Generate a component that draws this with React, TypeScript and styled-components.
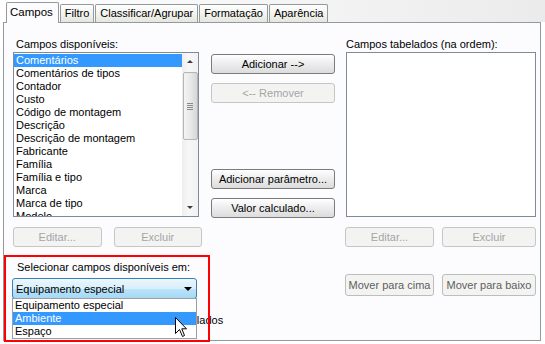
import React from "react";
import styled, { createGlobalStyle, css } from "styled-components";

const GlobalStyle = createGlobalStyle`
  html, body {
    margin: 0;
    padding: 0;
    background: #ffffff;
  }
  body {
    font-family: "Liberation Sans", Arial, sans-serif;
    font-size: 11px;
    color: #000000;
  }
`;

const Window = styled.div`
  position: relative;
  width: 545px;
  height: 344px;
  overflow: hidden;
  background: #ffffff;
`;

const TabStrip = styled.div`
  display: flex;
  align-items: flex-end;
  height: 22px;
  padding-left: 6px;
  background: linear-gradient(to right, #ffffff 0%, #f6f6f6 45%, #ebebeb 100%);
`;

const Tab = styled.div<{ $active?: boolean }>`
  box-sizing: border-box;
  height: 18px;
  padding: 0 4px;
  margin-right: 1px;
  line-height: 17px;
  border: 1px solid #919b9c;
  border-bottom: none;
  border-radius: 2px 2px 0 0;
  background: linear-gradient(#fefefe, #f1f1ec 60%, #e6e6e0);
  white-space: nowrap;

  ${(p) =>
    p.$active &&
    css`
      position: relative;
      z-index: 1;
      height: 21px;
      margin-bottom: -1px;
      padding: 0 5px 0 3px;
      line-height: 19px;
      font-size: 11.5px;
      background: #fcfcfe;
    `}
`;

const Panel = styled.div`
  box-sizing: border-box;
  display: flex;
  width: 538px;
  height: 319px;
  margin-left: 3px;
  padding: 13px 0 0 9px;
  border: 1px solid #919b9c;
  background: #fcfcfe;
`;

const Column = styled.div<{ $width: number; $offset?: number }>`
  display: flex;
  flex-direction: column;
  width: ${(p) => p.$width}px;
  margin-left: ${(p) => p.$offset ?? 0}px;
`;

const Label = styled.div<{ $indent?: number; $top?: number }>`
  height: 16px;
  margin-top: ${(p) => p.$top ?? 0}px;
  line-height: 16px;
  padding-left: ${(p) => p.$indent ?? 3}px;
  white-space: nowrap;
`;

const ListBox = styled.div<{ $width: number; $shift?: number }>`
  box-sizing: border-box;
  display: flex;
  width: ${(p) => p.$width}px;
  height: 165px;
  margin-left: ${(p) => p.$shift ?? 0}px;
  border: 1px solid #7f8a99;
  background: #ffffff;
  overflow: hidden;
`;

const Items = styled.div`
  flex: 1;
  padding-top: 1px;
  overflow: hidden;
`;

const Item = styled.div<{ $selected?: boolean }>`
  height: 13px;
  line-height: 13px;
  padding-left: 2px;
  white-space: nowrap;
  ${(p) =>
    p.$selected &&
    css`
      background: #3399ff;
      color: #ffffff;
    `}
`;

const ScrollBar = styled.div`
  display: flex;
  flex-direction: column;
  align-items: center;
  width: 16px;
  background: linear-gradient(to right, #eeeeee, #f7f7f7 40%, #f1f1f1);
`;

const ScrollArrow = styled.div<{ $down?: boolean }>`
  display: flex;
  align-items: center;
  justify-content: center;
  width: 16px;
  height: 17px;
  &::after {
    content: "";
    border-left: 3px solid transparent;
    border-right: 3px solid transparent;
    ${(p) =>
      p.$down
        ? css`border-top: 3px solid #3c3c3c;`
        : css`border-bottom: 3px solid #3c3c3c;`}
  }
`;

const Thumb = styled.div`
  box-sizing: border-box;
  display: flex;
  flex-direction: column;
  align-items: center;
  justify-content: center;
  gap: 1px;
  width: 15px;
  height: 68px;
  margin-top: 2px;
  border: 1px solid #b5b5b5;
  border-radius: 2px;
  background: linear-gradient(to right, #f4f4f4, #e8e8e8 50%, #d6d6d6);
`;

const Grip = styled.span`
  width: 6px;
  height: 1px;
  background: #8a8a8a;
`;

const Spacer = styled.div`
  flex: 1;
`;

type Tone = "normal" | "disabled" | "muted";

const Button = styled.div<{ $tone?: Tone; $width: number; $tall?: boolean }>`
  box-sizing: border-box;
  display: flex;
  align-items: center;
  justify-content: center;
  width: ${(p) => p.$width}px;
  height: ${(p) => (p.$tall ? 22 : 20)}px;
  border-radius: 3px;
  white-space: nowrap;
  ${(p) =>
    p.$tone === "disabled"
      ? css`
          border: 1px solid #c6c6c6;
          background: #f3f3f2;
          color: #a5a5a5;
        `
      : p.$tone === "muted"
      ? css`
          border: 1px solid #bdbdbd;
          background: #f3f3f2;
          color: #5e5e5e;
        `
      : css`
          border: 1px solid #7a7a7a;
          background: linear-gradient(#ffffff, #eeeeee 45%, #dcdcdc);
          color: #000000;
        `}
`;

const ButtonRow = styled.div<{ $top: number; $gap: number }>`
  display: flex;
  gap: ${(p) => p.$gap}px;
  margin-top: ${(p) => p.$top}px;
`;

const ButtonStack = styled.div<{ $top: number }>`
  display: flex;
  flex-direction: column;
  gap: 9px;
  margin-top: ${(p) => p.$top}px;
`;

const ComboArea = styled.div`
  position: relative;
  margin-top: 3px;
  margin-left: -1px;
`;

const Combo = styled.div`
  box-sizing: border-box;
  display: flex;
  align-items: center;
  justify-content: space-between;
  width: 185px;
  height: 21px;
  padding: 0 4px 0 3px;
  border: 1px solid #3c7fb1;
  border-radius: 3px;
  background: linear-gradient(#eaf6fd 0%, #d9effc 50%, #bce4fa 51%, #a6d8f5 100%);
  white-space: nowrap;
`;

const ComboArrow = styled.span`
  width: 0;
  height: 0;
  border-left: 4px solid transparent;
  border-right: 4px solid transparent;
  border-top: 4px solid #000000;
`;

const DropList = styled.div`
  position: absolute;
  z-index: 3;
  top: 20px;
  left: 0;
  box-sizing: border-box;
  width: 185px;
  border: 1px solid #9a9ea6;
  background: #ffffff;
`;

const DropItem = styled.div<{ $selected?: boolean }>`
  height: 13px;
  line-height: 13px;
  padding-left: 2px;
  white-space: nowrap;
  ${(p) =>
    p.$selected &&
    css`
      background: #3399ff;
      color: #ffffff;
    `}
`;

const CheckRow = styled.div`
  display: flex;
  align-items: center;
  gap: 7px;
  margin-top: 14px;
  height: 13px;
  white-space: nowrap;
`;

const CheckBox = styled.span`
  box-sizing: border-box;
  width: 13px;
  height: 13px;
  border: 1px solid #1c5180;
  background: #f4f4f0;
`;

const Highlight = styled.div`
  position: absolute;
  z-index: 5;
  left: 4px;
  top: 255px;
  box-sizing: border-box;
  width: 206px;
  height: 87px;
  border: 2px solid #ff0000;
`;

const Pointer = styled.svg`
  position: absolute;
  z-index: 6;
  left: 175px;
  top: 317px;
`;

const available = [
  "Comentários",
  "Comentários de tipos",
  "Contador",
  "Custo",
  "Código de montagem",
  "Descrição",
  "Descrição de montagem",
  "Fabricante",
  "Família",
  "Família e tipo",
  "Marca",
  "Marca de tipo",
  "Modelo",
];

const categories = ["Equipamento especial", "Ambiente", "Espaço"];

export default function App() {
  return (
    <>
      <GlobalStyle />
      <Window>
        <TabStrip>
          <Tab $active>Campos</Tab>
          <Tab>Filtro</Tab>
          <Tab>Classificar/Agrupar</Tab>
          <Tab>Formatação</Tab>
          <Tab>Aparência</Tab>
        </TabStrip>
        <Panel>
          <Column $width={189}>
            <Label>Campos disponíveis:</Label>
            <ListBox $width={186}>
              <Items>
                {available.map((name, i) => (
                  <Item key={name} $selected={i === 0}>
                    {name}
                  </Item>
                ))}
              </Items>
              <ScrollBar>
                <ScrollArrow />
                <Thumb>
                  <Grip />
                  <Grip />
                  <Grip />
                  <Grip />
                </Thumb>
                <Spacer />
                <ScrollArrow $down />
              </ScrollBar>
            </ListBox>
            <ButtonRow $top={10} $gap={12}>
              <Button $tone="disabled" $width={89}>
                Editar...
              </Button>
              <Button $tone="disabled" $width={89}>
                Excluir
              </Button>
            </ButtonRow>
            <Label $indent={4} $top={12}>
              Selecionar campos disponíveis em:
            </Label>
            <ComboArea>
              <Combo>
                Equipamento especial
                <ComboArrow />
              </Combo>
              <DropList>
                {categories.map((c) => (
                  <DropItem key={c} $selected={c === "Ambiente"}>
                    {c}
                  </DropItem>
                ))}
              </DropList>
            </ComboArea>
            <CheckRow>
              <CheckBox />
              Incluir elementos em arquivos vinculados
            </CheckRow>
          </Column>

          <Column $width={124} $offset={9}>
            <ButtonStack $top={18}>
              <Button $width={124}>Adicionar --&gt;</Button>
              <Button $tone="disabled" $width={124}>
                &lt;-- Remover
              </Button>
            </ButtonStack>
            <ButtonStack $top={66}>
              <Button $width={124}>Adicionar parâmetro...</Button>
              <Button $width={124}>Valor calculado...</Button>
            </ButtonStack>
          </Column>

          <Column $width={191} $offset={10}>
            <Label $indent={1}>Campos tabelados (na ordem):</Label>
            <ListBox $width={190} $shift={1} />
            <ButtonRow $top={10} $gap={8}>
              <Button $tone="disabled" $width={89}>
                Editar...
              </Button>
              <Button $tone="disabled" $width={94}>
                Excluir
              </Button>
            </ButtonRow>
            <ButtonRow $top={27} $gap={8}>
              <Button $tone="muted" $width={89} $tall>
                Mover para cima
              </Button>
              <Button $tone="muted" $width={94} $tall>
                Mover para baixo
              </Button>
            </ButtonRow>
          </Column>
        </Panel>
        <Highlight />
        <Pointer width="13" height="22" viewBox="0 0 13 22">
          <path
            d="M0.5 0.5 L0.5 16.5 L4.5 12.5 L7.5 19.5 L9.5 18.5 L6.8 11.8 L11.5 11.8 Z"
            fill="#ffffff"
            stroke="#000000"
            strokeWidth="1"
            strokeLinejoin="miter"
          />
        </Pointer>
      </Window>
    </>
  );
}
